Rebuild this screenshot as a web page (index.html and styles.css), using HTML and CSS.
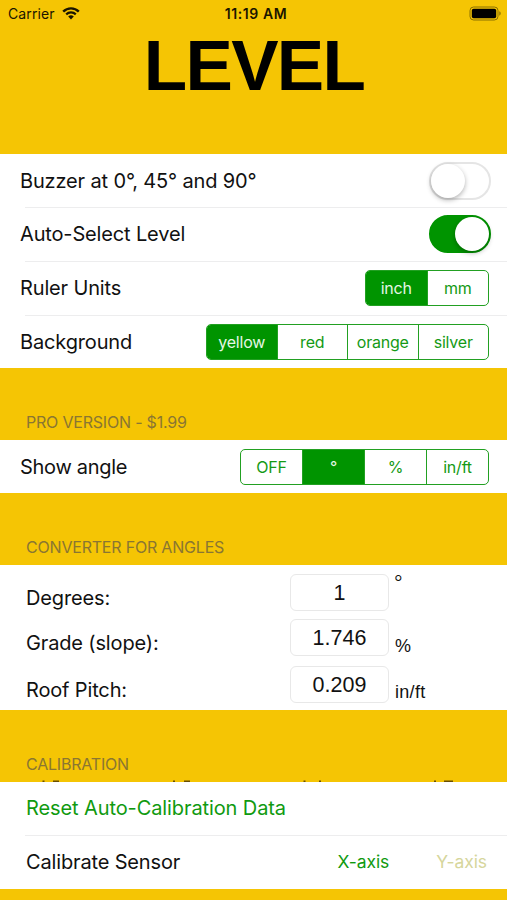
FILE: index.html
```html
<!DOCTYPE html>
<html lang="en">
<head>
    <meta charset="UTF-8">
    <title>Level</title>
    <link rel="stylesheet" href="styles.css">
</head>
<body>
    <div class="statusbar">
        <div class="carrier">
            <span>Carrier</span>
            <svg class="wifi" width="18" height="13" viewBox="0 0 18 13">
                <path d="M1.2 4.6a11 11 0 0 1 15.6 0" fill="none" stroke="#1a1500" stroke-width="2.4"/>
                <path d="M4.2 7.4a6.9 6.9 0 0 1 9.6 0" fill="none" stroke="#1a1500" stroke-width="2.2"/>
                <path d="M9 12.4L6.2 9.6a4 4 0 0 1 5.6 0z" fill="#1a1500"/>
            </svg>
        </div>
        <div class="time">11:19 AM</div>
        <svg class="battery" width="33" height="15" viewBox="0 0 33 15">
            <rect x="1" y="1" width="28" height="13" rx="3.6" fill="none" stroke="#8a7000" stroke-width="1"/>
            <rect x="2.8" y="2.8" width="24.4" height="9.4" rx="1.8" fill="#000"/>
            <path d="M30.3 5.3v4.4a2.4 2.4 0 0 0 0-4.4z" fill="#8a7000"/>
        </svg>
    </div>
    <h1>LEVEL</h1>

    <div class="group settings">
        <div class="row">
            <span class="label buzzer">Buzzer at 0°, 45° and 90°</span>
            <span class="switch"></span>
        </div>
        <div class="row">
            <span class="label">Auto-Select Level</span>
            <span class="switch on"></span>
        </div>
        <div class="row">
            <span class="label">Ruler Units</span>
            <div class="segments units">
                <span class="selected">inch</span>
                <span>mm</span>
            </div>
        </div>
        <div class="row">
            <span class="label">Background</span>
            <div class="segments colors">
                <span class="selected">yellow</span>
                <span>red</span>
                <span>orange</span>
                <span>silver</span>
            </div>
        </div>
    </div>

    <h2>PRO VERSION - $1.99</h2>
    <div class="group pro">
        <div class="row">
            <span class="label show">Show angle</span>
            <div class="segments angle">
                <span>OFF</span>
                <span class="selected">°</span>
                <span>%</span>
                <span>in/ft</span>
            </div>
        </div>
    </div>

    <h2>CONVERTER FOR ANGLES</h2>
    <div class="group converter">
        <div class="field">
            <span class="label">Degrees:</span>
            <span class="value">1</span>
            <span class="unit degree">°</span>
        </div>
        <div class="field">
            <span class="label">Grade (slope):</span>
            <span class="value">1.746</span>
            <span class="unit">%</span>
        </div>
        <div class="field">
            <span class="label">Roof Pitch:</span>
            <span class="value">0.209</span>
            <span class="unit">in/ft</span>
        </div>
    </div>

    <h2>CALIBRATION</h2>
    <div class="group calibration">
        <svg class="clipped" width="507" height="2" viewBox="0 0 507 2">
            <path d="M42.5 .6h2v1.4h-2zM53 .6h6v1.4h-6zM173 .6h2v1.4h-2zM184 .6h6v1.4h-6zM303.5 .6h2v1.4h-2zM319 .6h2v1.4h-2zM434 .6h2v1.4h-2zM444 .6h9v1.4h-9z" fill="#6b4f00"/>
        </svg>
        <div class="row">
            <span class="label reset">Reset Auto-Calibration Data</span>
        </div>
        <div class="row">
            <span class="label">Calibrate Sensor</span>
            <div class="axes">
                <span class="axis">X-axis</span>
                <span class="axis disabled">Y-axis</span>
            </div>
        </div>
    </div>
</body>
</html>
```
FILE: styles.css
```css
* {
    box-sizing: border-box;
}
body {
    margin: 0;
    height: 900px;
    overflow: hidden;
    background: #f5c504;
    color: #111;
    font-family: Inter, sans-serif;
    font-size: 20px;
}
.statusbar {
    display: grid;
    grid-template-columns: 1fr auto 1fr;
    align-items: center;
    height: 27px;
    padding: 0 5px 0 8px;
    font-size: 14px;
    color: #1a1500;
}
.carrier {
    display: flex;
    align-items: center;
    gap: 7px;
    letter-spacing: .1px;
}
.time {
    padding-left: 2px;
    font-weight: 600;
    letter-spacing: .6px;
}
.battery {
    justify-self: end;
}
h1 {
    margin: 0;
    height: 127px;
    padding: 3px 0 0 1px;
    text-align: center;
    font: bold 71px/72px "Liberation Sans", Arial, sans-serif;
    letter-spacing: -1.7px;
    font-kerning: none;
    color: #000;
}
h2 {
    display: flex;
    align-items: flex-end;
    margin: 0;
    height: 72px;
    padding: 0 0 8px 26px;
    font-size: 16px;
    line-height: 20px;
    font-weight: 400;
    letter-spacing: -.2px;
    color: #8a7632;
}
.group {
    background: #fff;
}
.settings {
    height: 214px;
}
.pro {
    height: 52.5px;
}
.row {
    display: flex;
    align-items: center;
    justify-content: space-between;
    height: 53px;
    padding: 0 18px 0 20px;
}
.row + .row {
    height: 54px;
    background: linear-gradient(#ededee, #ededee) 25px 0 / 100% 1px no-repeat;
}
.label {
    white-space: nowrap;
    letter-spacing: -.15px;
}
.show {
    letter-spacing: -.3px;
}
.switch {
    display: flex;
    width: 62px;
    height: 38px;
    margin-right: -2px;
    border: 2px solid #e5e5e5;
    border-radius: 19px;
}
.switch::before {
    content: "";
    width: 34px;
    height: 34px;
    border-radius: 50%;
    background: #fff;
    box-shadow: 0 2px 5px rgba(0, 0, 0, .3);
}
.switch.on {
    justify-content: flex-end;
    background: #009400;
    border-color: #009400;
}
.segments {
    display: flex;
    height: 36px;
    border: 1px solid #22a022;
    border-radius: 5px;
    overflow: hidden;
    font-size: 16px;
    letter-spacing: -.2px;
    color: #159a15;
}
.segments span {
    flex: 1;
    display: flex;
    align-items: center;
    justify-content: center;
}
.segments span + span {
    border-left: 1px solid #22a022;
}
.segments .selected {
    background: #009400;
    color: #e5f7e5;
}
.units {
    width: 124px;
}
.colors {
    width: 283px;
}
.angle {
    width: 249px;
}
.converter {
    height: 145.5px;
    padding-top: 8px;
}
.field {
    display: grid;
    grid-template-columns: 264px 99px 1fr;
    align-items: center;
    height: 36px;
    margin-bottom: 10.5px;
    padding-left: 26px;
}
.field .label {
    padding-top: 11px;
}
.value {
    height: 37px;
    border: 1px solid #e8e8e8;
    border-radius: 6px;
    text-align: center;
    font: 21.5px/37px "Liberation Sans", Arial, sans-serif;
}
.unit {
    padding: 16px 0 0 6px;
    font: 18px/20px "Liberation Sans", Arial, sans-serif;
    letter-spacing: .3px;
}
.unit.degree {
    padding: 0 0 20px 5px;
    font: 300 19px/20px Inter, sans-serif;
}
.calibration {
    position: relative;
}
.clipped {
    position: absolute;
    left: 0;
    top: -2px;
}
.calibration .row {
    padding-left: 26px;
}
.reset {
    color: #109a10;
    letter-spacing: -.1px;
}
.axes {
    display: flex;
    gap: 47px;
    padding-right: 2px;
}
.axis {
    font-size: 17.5px;
    letter-spacing: -.1px;
    color: #109a10;
}
.axis.disabled {
    color: #d6d69c;
}
.converter + h2 {
    height: 71.5px;
}
.calibration .row + .row {
    height: 54px;
}
```
